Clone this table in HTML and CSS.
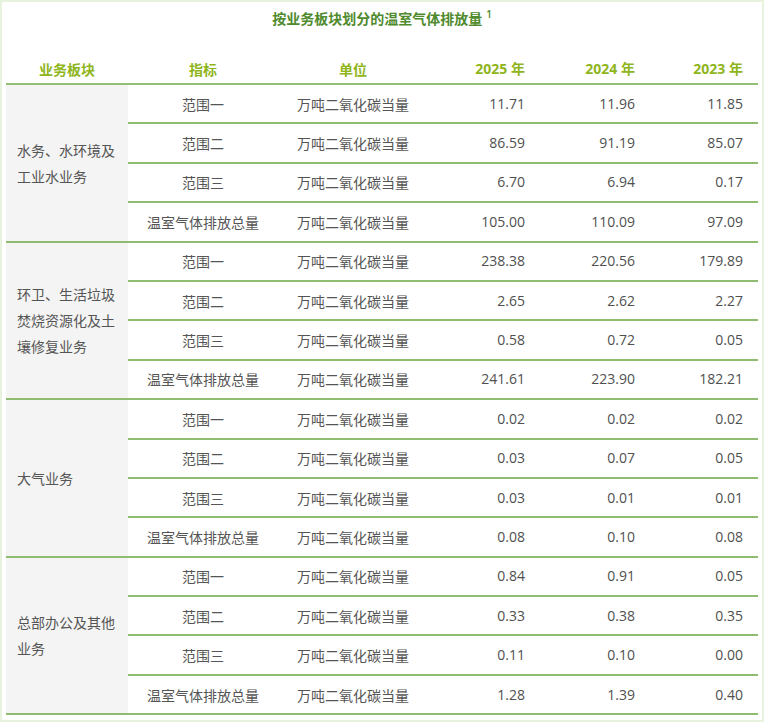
FILE: index.html
```html
<!DOCTYPE html>
<html lang="zh">
<head>
<meta charset="utf-8">
<link rel="stylesheet" href="styles.css">
</head>
<body>
<div class="frame">
  <div class="title">按业务板块划分的温室气体排放量<sup>1</sup></div>
  <table class="ghg">
    <colgroup>
      <col class="c1"><col class="c2"><col class="c3"><col class="c4"><col class="c5"><col>
    </colgroup>
    <thead>
      <tr>
        <th class="ctr">业务板块</th>
        <th class="ctr">指标</th>
        <th class="ctr">单位</th>
        <th class="num">2025 年</th>
        <th class="num">2024 年</th>
        <th class="num last">2023 年</th>
      </tr>
    </thead>
    <tbody>
      <tr><td class="seg" rowspan="4">水务、水环境及工业水业务</td><td class="ctr">范围一</td><td class="ctr">万吨二氧化碳当量</td><td class="num">11.71</td><td class="num">11.96</td><td class="num last">11.85</td></tr>
      <tr><td class="ctr">范围二</td><td class="ctr">万吨二氧化碳当量</td><td class="num">86.59</td><td class="num">91.19</td><td class="num last">85.07</td></tr>
      <tr><td class="ctr">范围三</td><td class="ctr">万吨二氧化碳当量</td><td class="num">6.70</td><td class="num">6.94</td><td class="num last">0.17</td></tr>
      <tr><td class="ctr">温室气体排放总量</td><td class="ctr">万吨二氧化碳当量</td><td class="num">105.00</td><td class="num">110.09</td><td class="num last">97.09</td></tr>

      <tr><td class="seg" rowspan="4">环卫、生活垃圾焚烧资源化及土壤修复业务</td><td class="ctr">范围一</td><td class="ctr">万吨二氧化碳当量</td><td class="num">238.38</td><td class="num">220.56</td><td class="num last">179.89</td></tr>
      <tr><td class="ctr">范围二</td><td class="ctr">万吨二氧化碳当量</td><td class="num">2.65</td><td class="num">2.62</td><td class="num last">2.27</td></tr>
      <tr><td class="ctr">范围三</td><td class="ctr">万吨二氧化碳当量</td><td class="num">0.58</td><td class="num">0.72</td><td class="num last">0.05</td></tr>
      <tr><td class="ctr">温室气体排放总量</td><td class="ctr">万吨二氧化碳当量</td><td class="num">241.61</td><td class="num">223.90</td><td class="num last">182.21</td></tr>

      <tr><td class="seg" rowspan="4">大气业务</td><td class="ctr">范围一</td><td class="ctr">万吨二氧化碳当量</td><td class="num">0.02</td><td class="num">0.02</td><td class="num last">0.02</td></tr>
      <tr><td class="ctr">范围二</td><td class="ctr">万吨二氧化碳当量</td><td class="num">0.03</td><td class="num">0.07</td><td class="num last">0.05</td></tr>
      <tr><td class="ctr">范围三</td><td class="ctr">万吨二氧化碳当量</td><td class="num">0.03</td><td class="num">0.01</td><td class="num last">0.01</td></tr>
      <tr><td class="ctr">温室气体排放总量</td><td class="ctr">万吨二氧化碳当量</td><td class="num">0.08</td><td class="num">0.10</td><td class="num last">0.08</td></tr>

      <tr><td class="seg" rowspan="4">总部办公及其他业务</td><td class="ctr">范围一</td><td class="ctr">万吨二氧化碳当量</td><td class="num">0.84</td><td class="num">0.91</td><td class="num last">0.05</td></tr>
      <tr><td class="ctr">范围二</td><td class="ctr">万吨二氧化碳当量</td><td class="num">0.33</td><td class="num">0.38</td><td class="num last">0.35</td></tr>
      <tr><td class="ctr">范围三</td><td class="ctr">万吨二氧化碳当量</td><td class="num">0.11</td><td class="num">0.10</td><td class="num last">0.00</td></tr>
      <tr><td class="ctr">温室气体排放总量</td><td class="ctr">万吨二氧化碳当量</td><td class="num">1.28</td><td class="num">1.39</td><td class="num last">0.40</td></tr>
    </tbody>
  </table>
</div>
</body>
</html>
```

FILE: styles.css
```css
html, body {
  margin: 0;
  padding: 0;
  background: #ffffff;
}

.frame {
  box-sizing: border-box;
  width: 764px;
  height: 722px;
  border: 2px solid #e7f3de;
  padding: 0 4px;
  font-family: "Noto Sans CJK SC", "Noto Sans", sans-serif;
  color: #555555;
  font-size: 14px;
}

.title {
  height: 36px;
  padding-top: 6px;
  box-sizing: border-box;
  line-height: 20px;
  text-align: center;
  font-weight: 700;
  color: #4f8a2d;
  font-size: 14px;
}

.title sup {
  font-size: 10px;
  font-weight: 600;
  margin-left: 4px;
  vertical-align: 6px;
  line-height: 0;
  font-family: "Open Sans", sans-serif;
}

.ghg {
  width: 752px;
  table-layout: fixed;
  border-collapse: separate;
  border-spacing: 0;
}

.c1 { width: 122px; }
.c2 { width: 150px; }
.c3 { width: 150px; }
.c4 { width: 110px; }
.c5 { width: 110px; }

.ghg th {
  height: 41px;
  padding: 0 13px 4px 13px;
  vertical-align: bottom;
  line-height: 20px;
  font-weight: 700;
  color: #8fb51d;
  border-bottom: 2px solid #93bf74;
}

.ghg td {
  height: 37.4px;
  padding: 0 13px;
  line-height: 20px;
  border-bottom: 2px solid #8fbc70;
  vertical-align: middle;
  white-space: nowrap;
}

.ghg td.seg {
  background: #f4f4f4;
  white-space: normal;
  text-align: left;
  line-height: 26px;
  padding: 0 11px 0 11px;
}

.ctr { text-align: center; }

.num {
  text-align: right;
  font-family: "Open Sans", "Noto Sans CJK SC", sans-serif;
}

.ghg th.num {
  font-family: "Open Sans", "Noto Sans CJK SC", sans-serif;
}

.ghg td.num {
  color: #505050;
}

.ghg .last { padding-right: 15px; }
```
